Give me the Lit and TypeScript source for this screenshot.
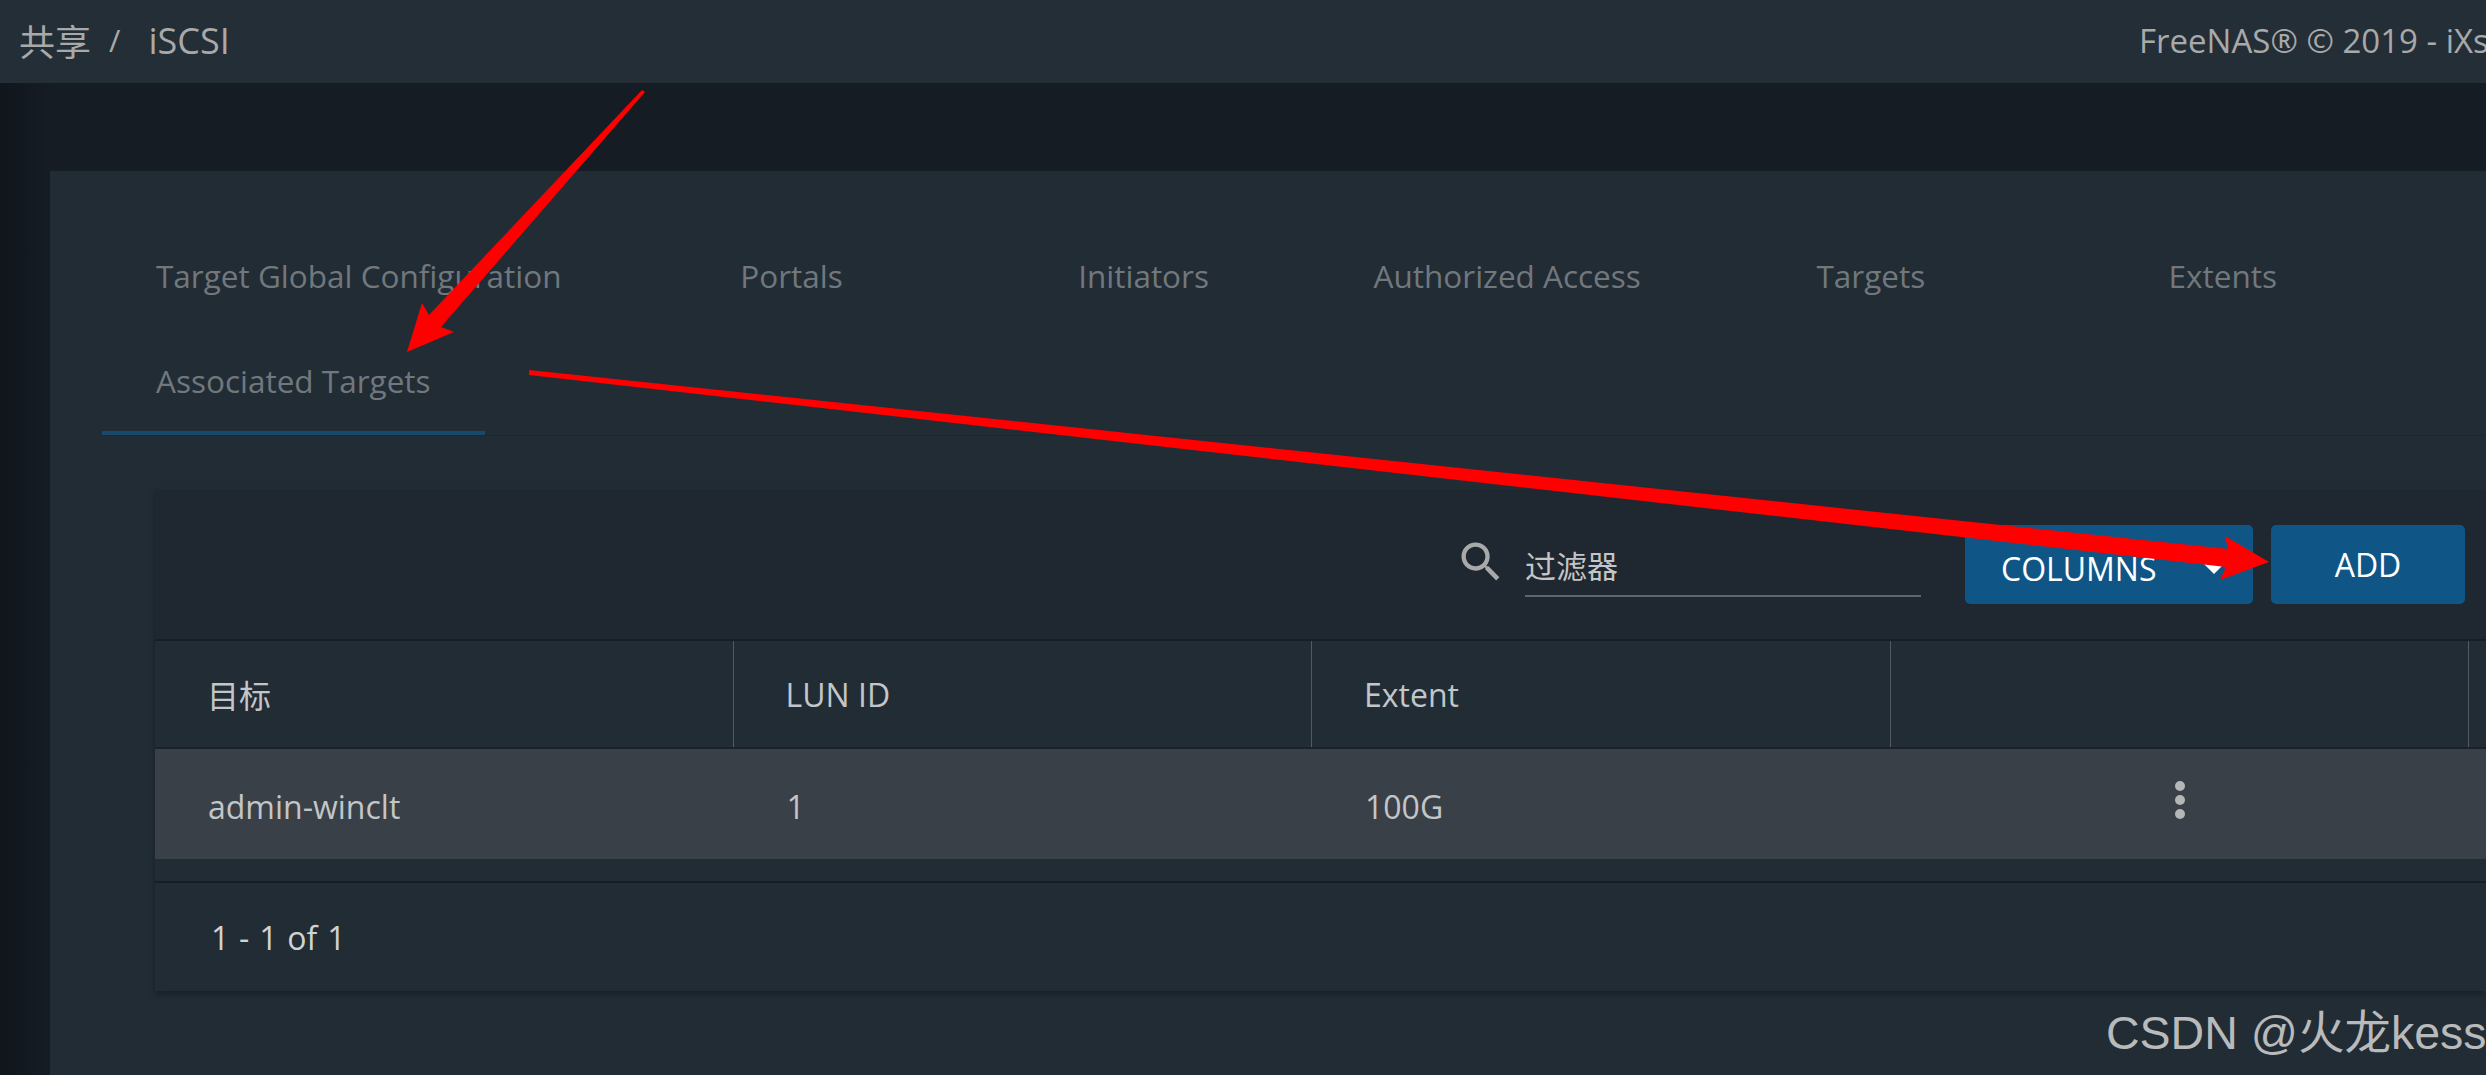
import { LitElement, html, css, svg } from 'lit';
import { customElement } from 'lit/decorators.js';

const TABS = ['Target Global Configuration', 'Portals', 'Initiators', 'Authorized Access', 'Targets', 'Extents', 'Associated Targets'];
const COLUMNS = ['目标', 'LUN ID', 'Extent', ''];
const ROWS = [['admin-winclt', '1', '100G']];

@customElement('app-root')
export class AppRoot extends LitElement {
  static styles = css`
    :host {
      display: block;
      position: relative;
      height: 1075px;
      overflow: hidden;
      background: linear-gradient(90deg, #10161c 0, #161c23 50px);
      font-family: 'Open Sans', 'Noto Sans CJK SC', sans-serif;
    }

    .topbar {
      height: 83px;
      display: flex;
      align-items: center;
      justify-content: space-between;
      padding: 0 0 3px 19px;
      box-sizing: border-box;
      background: #242e37;
      color: #a8a9a9;
      white-space: nowrap;
      overflow: hidden;
    }

    .crumbs {
      display: flex;
      align-items: center;
      font-size: 36px;
    }

    .crumbs .sep {
      margin: 0 28px 0 18px;
      font-size: 31px;
    }

    .copyright {
      font-size: 33px;
      flex: none;
      width: 347px;
      overflow: hidden;
    }

    .main {
      padding: 88px 0 0 50px;
    }

    .card {
      background: #222c35;
      padding-top: 54px;
      height: 904px;
      box-sizing: border-box;
    }

    .tabs {
      display: flex;
      flex-wrap: wrap;
      margin-left: 52px;
      border-bottom: 1px solid #1e272f;
    }

    .tab {
      box-sizing: border-box;
      min-width: 352px;
      height: 105px;
      padding: 0 54px 4px;
      display: flex;
      align-items: center;
      justify-content: center;
      font-size: 31.5px;
      color: #71787d;
      white-space: nowrap;
    }

    .tab.active {
      border-bottom: 4px solid #17496d;
      padding-bottom: 0;
    }

    .table {
      margin: 54px 0 0 105px;
      background: #222c35;
      box-shadow: 0 3px 6px rgba(0, 0, 0, 0.3);
    }

    .toolbar {
      height: 149px;
      box-sizing: border-box;
      display: flex;
      align-items: center;
      justify-content: flex-end;
      padding: 0 21px 0 0;
      background: #1f2730;
    }

    .filter {
      display: flex;
      align-items: center;
      gap: 18px;
      margin-right: 44px;
    }

    .filter svg {
      width: 52px;
      height: 52px;
      fill: #a8a9a9;
      margin-top: -6px;
    }

    .filter-input {
      width: 396px;
      height: 56px;
      box-sizing: border-box;
      border-bottom: 2px solid #5e666c;
      font-size: 31px;
      line-height: 50px;
      color: #c4c5c6;
      margin-top: 9px;
    }

    .btn {
      height: 79px;
      box-sizing: border-box;
      border-radius: 5px;
      background: #0f5687;
      color: #fff;
      font-size: 32px;
      display: flex;
      align-items: center;
    }

    .btn-columns {
      width: 288px;
      padding: 0 28px 0 36px;
      justify-content: space-between;
      margin-right: 18px;
    }

    .btn-columns span {
      padding-top: 8px;
    }

    .caret {
      width: 0;
      height: 0;
      border-left: 11px solid transparent;
      border-right: 11px solid transparent;
      border-top: 11px solid #fff;
      margin-top: 8px;
    }

    .btn-add {
      width: 194px;
      justify-content: center;
    }

    .grid {
      display: grid;
      grid-template-columns: repeat(4, 578.5px);
    }

    .head {
      border-top: 2px solid #171d25;
      border-bottom: 2px solid #1b222a;
      height: 106px;
    }

    .head .cell {
      padding-left: 52px;
      border-right: 1.5px solid #525b62;
      color: #c3c6c8;
      font-size: 32px;
    }

    .cell {
      box-sizing: border-box;
      display: flex;
      align-items: center;
      padding-left: 53px;
    }

    .row {
      height: 110px;
      background: #3a4047;
      color: #c3c6c8;
      font-size: 32px;
    }

    .row .cell {
      padding-top: 4px;
    }

    .row .actions {
      padding: 0 0 8px 0;
      justify-content: center;
    }

    .kebab {
      display: flex;
      flex-direction: column;
      gap: 4px;
    }

    .kebab i {
      display: block;
      width: 10px;
      height: 10px;
      border-radius: 50%;
      background: #b4b6b7;
    }

    .table-footer {
      margin-top: 22px;
      border-top: 2px solid #171d25;
      height: 110px;
      box-sizing: border-box;
      display: flex;
      align-items: center;
      padding-left: 56px;
      font-size: 32px;
      word-spacing: 1.5px;
      color: #ced3d6;
    }

    .overlay {
      position: absolute;
      inset: 0;
      width: 2486px;
      height: 1075px;
      pointer-events: none;
    }

    .watermark {
      position: absolute;
      left: 2106px;
      top: 1003px;
      font-family: 'Liberation Sans', 'Noto Sans CJK SC', sans-serif;
      font-size: 46.5px;
      line-height: 60px;
      color: #b8babb;
      white-space: nowrap;
    }
  `;

  private arrows() {
    return svg`
      <polygon fill="#ff0000" points="642,90 645,92 441,327 454,332 407,352 422,303 429,315" />
      <polygon fill="#ff0000" points="529,370 2228,549 2225,536 2269,562 2220,580 2226,567 529,375" />
    `;
  }

  render() {
    return html`
      <div class="topbar">
        <div class="crumbs"><span>共享</span><span class="sep">/</span><span>iSCSI</span></div>
        <div class="copyright">FreeNAS® © 2019 - iXsystems, Inc</div>
      </div>
      <div class="main">
        <div class="card">
          <div class="tabs">
            ${TABS.map((t, i) => html`<div class="tab ${i === TABS.length - 1 ? 'active' : ''}">${t}</div>`)}
          </div>
          <div class="table">
            <div class="toolbar">
              <div class="filter">
                <svg viewBox="0 0 24 24"><path d="M15.5 14h-.79l-.28-.27A6.47 6.47 0 0 0 16 9.5 6.5 6.5 0 1 0 9.5 16c1.61 0 3.09-.59 4.23-1.57l.27.28v.79l5 4.99L20.49 19l-4.99-5zm-6 0C7.01 14 5 11.99 5 9.5S7.01 5 9.5 5 14 7.01 14 9.5 11.99 14 9.5 14z" /></svg>
                <div class="filter-input">过滤器</div>
              </div>
              <div class="btn btn-columns"><span>COLUMNS</span><div class="caret"></div></div>
              <div class="btn btn-add">ADD</div>
            </div>
            <div class="grid head">
              ${COLUMNS.map((c) => html`<div class="cell">${c}</div>`)}
            </div>
            ${ROWS.map((r) => html`
              <div class="grid row">
                ${r.map((v) => html`<div class="cell">${v}</div>`)}
                <div class="cell actions"><div class="kebab"><i></i><i></i><i></i></div></div>
              </div>
            `)}
            <div class="table-footer">1 - 1 of 1</div>
          </div>
        </div>
      </div>
      <svg class="overlay" viewBox="0 0 2486 1075">${this.arrows()}</svg>
      <div class="watermark">CSDN @火龙kess</div>
    `;
  }
}
